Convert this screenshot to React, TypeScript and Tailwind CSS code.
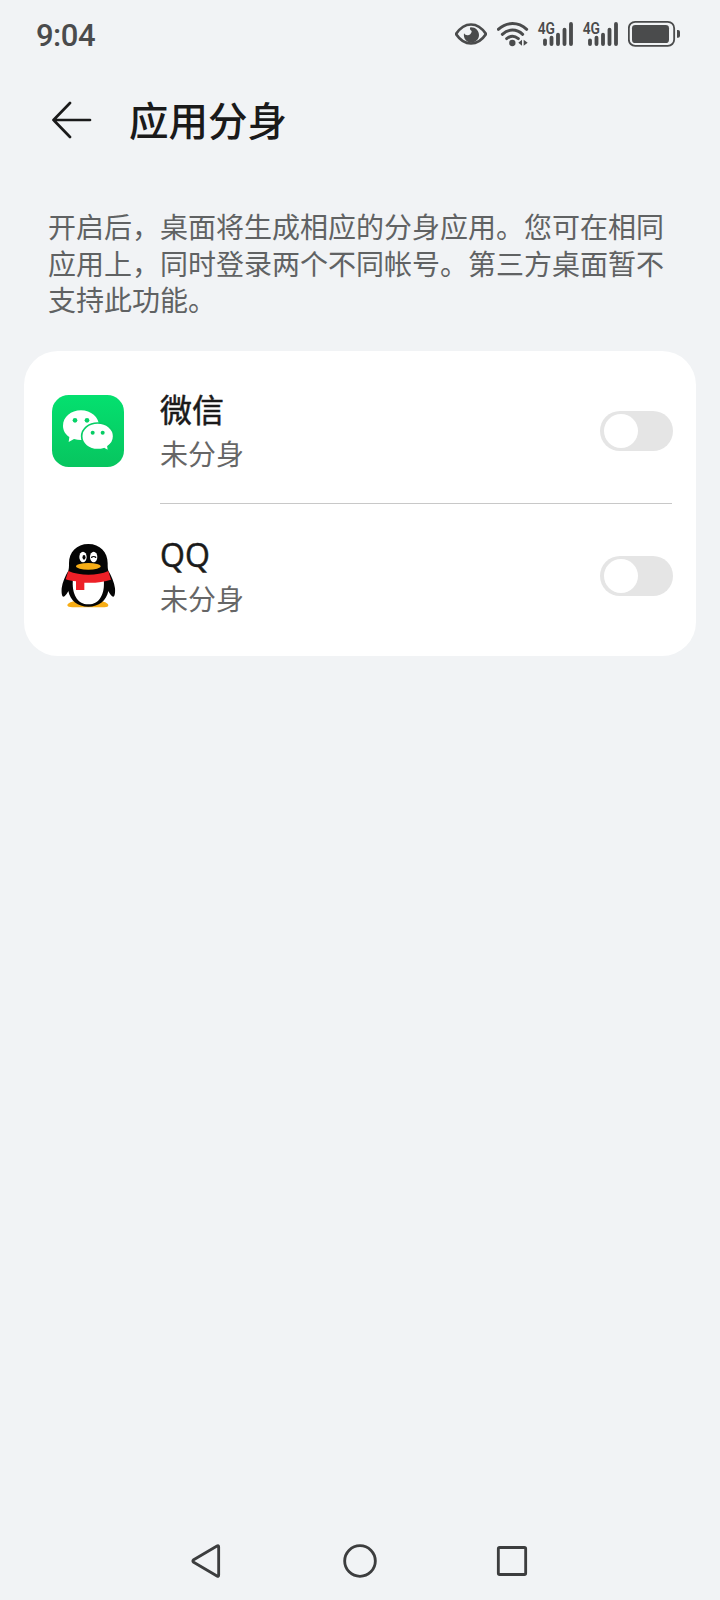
import { useState } from "react"

interface CloneApp {
  id: string
  name: string
  icon: React.ReactNode
}

function EyeIcon() {
  return (
    <svg className="h-[50px] w-8" viewBox="45 0 96 150" fill="none">
      <path d="M48 72C60 54 75 43.500 93 43.500s33 10.500 45 28.500c-12 18-27 28.500-45 28.500S60 90 48 72Z" stroke="#4a4b4c" strokeWidth="8" strokeLinejoin="round" />
      <path d="M91 52c-3 5 0 9 4 11 0 8-7 13-13 13-4 0-8-2-10-6-3 15 8 28 21 28 14 0 24-11 24-23 0-13-11-24-26-23Z" fill="#4a4b4c" />
    </svg>
  )
}

function WifiIcon() {
  return (
    <svg className="h-[50px] w-8" viewBox="171 0 96 150" fill="none">
      <g stroke="#4a4b4c" strokeWidth="9" strokeLinecap="round">
        <path d="M175 58C200 35 235 35 260 58" />
        <path d="M187 73C205 56 230 56 248 73" />
        <path d="M200 86C211 77 224 77 235 86" />
      </g>
      <circle cx="217" cy="99" r="9.5" fill="#4a4b4c" />
      <path d="M246 89v18l-11-9ZM251 89v18l12-9Z" fill="#4a4b4c" />
    </svg>
  )
}

function SignalIcon() {
  return (
    <svg className="h-[50px] w-[38px]" viewBox="66 0 114 150">
      <text x="68" y="72" fontSize="49" fontWeight="600" textLength="52" lengthAdjust="spacingAndGlyphs" fill="#4a4b4c" className="font-['Roboto',sans-serif]">
        4G
      </text>
      <g stroke="#4a4b4c" strokeWidth="11.500" strokeLinecap="round">
        <path d="M90 91V102" />
        <path d="M109.500 83V102" />
        <path d="M129 74V102" />
        <path d="M148.500 59V102" />
        <path d="M168 42V102" />
      </g>
    </svg>
  )
}

function BatteryIcon() {
  return (
    <svg className="h-[50px] w-[52px]" viewBox="204 0 156 150">
      <rect x="206.500" y="35.500" width="136" height="72" rx="19" fill="none" stroke="#4a4b4c" strokeWidth="5.500" />
      <rect x="216" y="45" width="111" height="54" rx="10" fill="#4a4b4c" />
      <path d="M351 60h3q6 0 6 6v11q0 6-6 6h-3Z" fill="#4a4b4c" />
    </svg>
  )
}

function WeChatIcon() {
  return (
    <svg className="size-[72px]" viewBox="36 30 216 216">
      <defs>
        <linearGradient id="wechat-bg" x1="0" y1="0" x2="0" y2="1">
          <stop offset="0" stopColor="#04e06f" />
          <stop offset="1" stopColor="#07c55f" />
        </linearGradient>
      </defs>
      <rect x="36" y="30" width="216" height="216" rx="50" fill="url(#wechat-bg)" />
      <path d="M123 76c-30 0-54 20-54 46 0 14 7 26 19 34l-2 15 16-9c7 2 14 3 21 3 31 0 54-18 54-43s-24-46-54-46Z" fill="#fff" />
      <circle cx="105" cy="106" r="7" fill="#06d267" />
      <circle cx="141" cy="106" r="7" fill="#06d267" />
      <path
        d="M173 114c-27 0-48 17-48 40s21 40 48 40c7 0 13-1 19-3l14 8-2-15c11-7 17-18 17-30 0-23-21-40-48-40Z"
        fill="#fff"
        stroke="#06ce65"
        strokeWidth="5"
      />
      <circle cx="158" cy="143" r="6" fill="#06cc64" />
      <circle cx="188" cy="143" r="6" fill="#06cc64" />
    </svg>
  )
}

function QQIcon() {
  return (
    <svg className="size-[72px]" viewBox="36 30 216 216">
      <path d="M103 214c-12 2-21 7-21 12 0 4 6 6 15 6h96c9 0 12-2 12-6 0-5-9-10-20-12Z" fill="#f7ad16" />
      {/* body and wings */}
      <path
        d="M145 42c-35 0-58 24-58 58 0 8 0 16-2 22-9 15-18 35-20 53-1 14 1 25 5 25 5 0 11-9 15-17 6 29 28 47 60 47s54-18 60-47c4 8 10 17 15 17 4 0 6-11 5-25-2-18-11-38-20-53-2-6-2-14-2-22 0-34-23-58-58-58Z"
        fill="#050505"
      />
      <path d="M99 146c-5 44 12 77 46 77s51-33 46-77Z" fill="#fff" />
      {/* scarf */}
      <path d="M85 123c36 15 86 15 120 0l8 26c-22 7-50 11-80 9v22h-25v-26c-12-1-22-3-31-6Z" fill="#ed2027" />
      <ellipse cx="129" cy="81" rx="11" ry="16" fill="#fff" />
      <ellipse cx="161" cy="81" rx="11" ry="16" fill="#fff" />
      <ellipse cx="132" cy="82" rx="4.500" ry="7" fill="#050505" />
      <path d="M155 82c3-3 9-3 12 0" stroke="#050505" strokeWidth="4" fill="none" strokeLinecap="round" />
      <ellipse cx="145" cy="109" rx="37" ry="10" fill="#f7ad16" />
    </svg>
  )
}

const apps: CloneApp[] = [
  { id: "wechat", name: "微信", icon: <WeChatIcon /> },
  { id: "qq", name: "QQ", icon: <QQIcon /> },
]

function StatusBar() {
  return (
    <div className="flex h-[70px] items-center justify-between pr-10 pl-9 text-[#4a4b4c]">
      <span className="font-['Roboto',sans-serif] text-[31px] leading-none font-medium tracking-[-0.5px]">9:04</span>
      <div className="flex items-center">
        <EyeIcon />
        <div className="ml-2.5 flex">
          <WifiIcon />
        </div>
        <div className="ml-2 flex gap-[7px]">
          <SignalIcon />
          <SignalIcon />
        </div>
        <div className="ml-2 flex">
          <BatteryIcon />
        </div>
      </div>
    </div>
  )
}

function Toggle({ checked, onChange }: { checked: boolean; onChange: () => void }) {
  return (
    <button
      role="switch"
      aria-checked={checked}
      onClick={onChange}
      className={`flex h-10 w-[73.5px] items-center rounded-full px-1 ${checked ? "justify-end bg-[#0a59f7]" : "justify-start bg-[#e5e5e5]"}`}
    >
      <span className="size-[34px] rounded-full bg-white" />
    </button>
  )
}

function NavBar() {
  return (
    <div className="flex h-20 items-center justify-center">
      <svg className="h-[60px] w-[380px]" viewBox="0 0 1140 180" fill="none" stroke="#3c3d3e" strokeWidth="8.500" strokeLinejoin="round">
        <path d="M141 48q5-3 5 3V135q0 6-5 3L71 97q-5-4 0-8Z" />
        <circle cx="570" cy="93" r="46" />
        <rect x="985" y="52.500" width="82" height="81" rx="4" />
      </svg>
    </div>
  )
}

export default function App() {
  const [enabled, setEnabled] = useState<Record<string, boolean>>({})

  const toggle = (id: string) => setEnabled((prev) => ({ ...prev, [id]: !prev[id] }))

  return (
    <div className="flex h-[1600px] w-[720px] flex-col bg-[#f1f3f5] font-['Noto_Sans_CJK_SC',sans-serif]">
      <StatusBar />

      <header className="flex h-[100px] items-center pl-[52px]">
        <svg className="h-10 w-10" viewBox="0 0 40 40" fill="none" stroke="#1a1a1a" strokeWidth="2.7" strokeLinecap="round" strokeLinejoin="round">
          <path d="M18 3 1.500 20 18 37M1.500 20H38" />
        </svg>
        <h1 className="mb-0.5 ml-[37px] text-[39.500px] leading-none font-medium text-[#1a1a1a]">应用分身</h1>
      </header>

      <p className="mt-[38px] ml-12 w-[620px] text-[28px] leading-[36.5px] text-[#606263]">
        开启后，桌面将生成相应的分身应用。您可在相同
        <br />
        应用上，同时登录两个不同帐号。第三方桌面暂不
        <br />
        支持此功能。
      </p>

      <main className="mx-6 mt-[33.5px] rounded-[34px] bg-white py-2">
        {apps.map((app, i) => (
          <div key={app.id}>
            {i > 0 && <div className="mr-6 ml-[136px] h-px bg-[#c8c8c8]" />}
            <div className="flex h-36 items-center pr-[23px] pl-7">
              {app.icon}
              <div className="ml-9 flex flex-1 flex-col">
                <span className="font-['Open_Sans','Noto_Sans_CJK_SC',sans-serif] text-[32px] leading-[44px] text-[#1a1a1a] [-webkit-text-stroke:0.5px_#1a1a1a]">
                  {app.name}
                </span>
                <span className="text-[28px] leading-[43px] text-[#666666]">未分身</span>
              </div>
              <Toggle checked={!!enabled[app.id]} onChange={() => toggle(app.id)} />
            </div>
          </div>
        ))}
      </main>

      <div className="flex-1" />
      <NavBar />
    </div>
  )
}
